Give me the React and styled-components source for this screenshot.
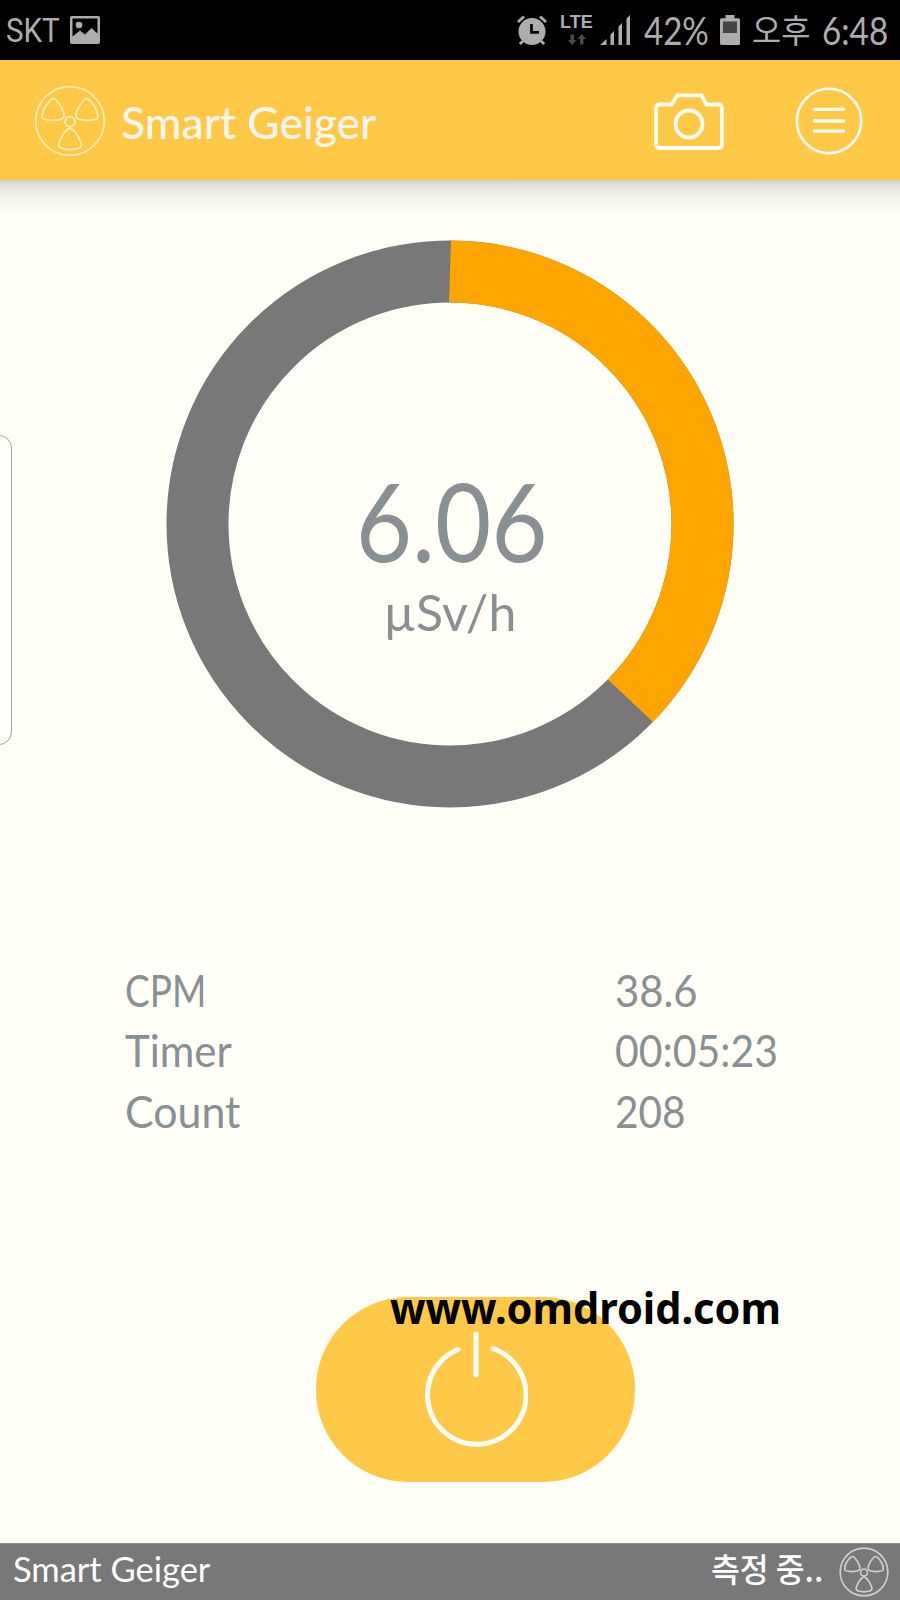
import React from 'react';
import styled, { createGlobalStyle } from 'styled-components';

const GlobalStyle = createGlobalStyle`
  * {
    box-sizing: border-box;
  }

  body {
    margin: 0;
    background: #fffff7;
    font-family: Lato, 'Noto Sans CJK KR', sans-serif;
  }

  svg {
    display: block;
    flex: none;
  }
`;

const Screen = styled.div`
  position: relative;
  width: 900px;
  height: 1600px;
  display: flex;
  flex-direction: column;
  overflow: hidden;
  background: #fffff7;
`;

const Text = styled.span`
  display: block;
  flex: none;
  width: ${({ $width }) => ($width ? `${$width}px` : 'auto')};
  font-size: ${({ $size }) => $size}px;
  white-space: nowrap;
  transform: scaleX(${({ $stretch }) => $stretch || 1});
  transform-origin: left center;
`;

const StatusBar = styled.header`
  height: 60px;
  padding: 0 13px 0 6px;
  display: flex;
  justify-content: space-between;
  background: #000;
  color: #adadad;
  line-height: 60px;
`;

const StatusGroup = styled.div`
  display: flex;
  align-items: center;
`;

const Carrier = styled(Text)`
  font-family: Roboto, sans-serif;
`;

const Battery = styled(Text)`
  margin-left: 13px;
`;

const Meridiem = styled(Text)`
  margin-left: 12px;
  line-height: 58px;
`;

const Network = styled.div`
  width: 40px;
  margin-left: 13px;
  display: flex;
  flex-direction: column;
  gap: 4px;
  font-family: 'Liberation Sans', sans-serif;
  font-weight: 700;
  line-height: 15px;

  svg {
    margin-left: 8px;
  }
`;

const Toolbar = styled.div`
  height: 120px;
  padding: 1px 37px 0 34px;
  display: flex;
  align-items: center;
  background: #ffc847;
  color: #f7f5ee;
  line-height: 60px;
`;

const Title = styled(Text)`
  margin-left: 15px;
  padding-top: 3px;
  font-weight: 500;
`;

const Actions = styled.div`
  margin-left: auto;
  display: flex;
  align-items: center;
  gap: 71px;
`;

const IconButton = styled.button`
  padding: 0;
  border: 0;
  background: none;
`;

const ToolbarShadow = styled.div`
  height: 36px;
  background: linear-gradient(#cfcfc9 0, #dcdcd5 3px, #e9e9e2 9px, #f6f6ee 21px, #fffff7 100%);
`;

const Gauge = styled.section`
  width: 568px;
  height: 568px;
  margin: 24px auto 0;
  display: grid;
  place-items: center;

  > * {
    grid-area: 1 / 1;
  }
`;

const Reading = styled.div`
  display: flex;
  flex-direction: column;
  align-items: center;
  padding-top: 66px;
  color: #899093;

  span {
    transform-origin: center;
  }
`;

const Dose = styled(Text)`
  margin-left: 4px;
  line-height: 110px;
`;

const Unit = styled(Text)`
  line-height: 74px;
`;

const Stats = styled.dl`
  margin: 151.5px 0 0;
  padding-left: 125px;
  color: #899093;
`;

const StatRow = styled.div`
  height: 60.7px;
  display: grid;
  grid-template-columns: 490px 1fr;
  line-height: 60.7px;

  dt,
  dd {
    margin: 0;
  }
`;

const PowerButton = styled.button`
  width: 319px;
  height: 185px;
  margin: 155.5px 0 0 316px;
  padding: 0 0 2px;
  flex: none;
  display: flex;
  align-items: center;
  justify-content: center;
  border: 0;
  border-radius: 92px;
  background: #ffc847;
`;

const Footer = styled.footer`
  height: 57px;
  margin-top: auto;
  padding: 0 11px 0 13px;
  display: flex;
  align-items: center;
  background: #787878;
  border-top: 1px solid #8b8b89;
  color: #fff;
`;

const FooterText = styled(Text)`
  line-height: 40px;
  margin-bottom: 8px;
`;

const Measuring = styled(FooterText)`
  margin-left: auto;
  font-family: 'Noto Sans CJK KR', sans-serif;
  font-weight: 500;
`;

const EdgePanel = styled.div`
  position: absolute;
  top: 435px;
  left: -20px;
  width: 32px;
  height: 310px;
  border: 1px solid #a3a39f;
  border-radius: 13px;
  background: #fffffb;
`;

const Watermark = styled(Text)`
  position: absolute;
  top: 1278px;
  left: 390px;
  font-family: 'Noto Sans', sans-serif;
  font-weight: 700;
  line-height: 60px;
  color: #000;
`;

const BLADE =
  'M-2.4 8.2Q0 6.6 2.4 8.2C5 10 9 16.5 11 22Q12.4 25.8 9 27Q0 30.2-9 27Q-12.4 25.8-11 22C-9 16.5-5 10-2.4 8.2Z';

const Radiation = ({ size, color, stroke }) => (
  <svg width={size} height={size} viewBox="-36 -36 72 72" fill="none" stroke={color} strokeWidth={stroke}>
    <circle r="34.3" />
    <circle r="5" cy="0.7" />
    {[0, 120, 240].map((angle) => (
      <path key={angle} d={BLADE} transform={`rotate(${angle})`} />
    ))}
  </svg>
);

const PictureIcon = () => (
  <svg width="30" height="28" viewBox="0 0 30 28" fill="#adadad">
    <path
      fillRule="evenodd"
      d="M2 0H28Q30 0 30 2V26Q30 28 28 28H2Q0 28 0 26V2Q0 0 2 0ZM2.5 2.5V20.5L10 14.5L15 18.5L21.5 12L27.5 17.5V2.5Z"
    />
    <circle cx="9" cy="9" r="3.3" />
  </svg>
);

const AlarmIcon = () => (
  <svg width="30" height="30" viewBox="0 0 30 30" fill="none" stroke="#adadad">
    <circle cx="15" cy="16.5" r="13.5" fill="#adadad" stroke="none" />
    <path d="M1 7L7 1.5M23 1.5L29 7M6 26L2.8 29M24 26L27.2 29" strokeWidth="2.8" />
    <path d="M14.5 9V17.3H22" stroke="#000" strokeWidth="2.7" />
  </svg>
);

const DataArrows = () => (
  <svg width="18" height="12" viewBox="0 0 18 12" fill="#4b4b4b">
    <path d="M2.5 0.5H6V6H8.5L4.2 11L0 6H2.5ZM12 10.5H15.5V5H18L13.7 0L9.5 5H12Z" />
  </svg>
);

const SignalIcon = () => (
  <svg width="31" height="30" viewBox="0 0 31 30" fill="#adadad">
    <path d="M0 30L6.5 24V30ZM10.5 19.5L14 16V30H10.5ZM18.5 11.5L22 8V30H18.5ZM26.5 3.5L30 0V30H26.5Z" />
  </svg>
);

const BatteryIcon = () => (
  <svg width="20" height="30" viewBox="0 0 20 30">
    <path d="M5.5 0H14.5V3.3H18.5Q20 3.3 20 5V28.3Q20 30 18.5 30H1.5Q0 30 0 28.3V5Q0 3.3 1.5 3.3H5.5Z" fill="#adadad" />
    <path d="M3 6.5H17V18H3Z" fill="#454545" />
  </svg>
);

const CameraIcon = () => (
  <svg width="70" height="58" viewBox="0 0 70 58" fill="none" stroke="#fffdf5" strokeWidth="3.8">
    <path
      d="M6 12.5H17.5L23.5 3.3H47.5L52.5 12.5H64Q68 12.5 68 16.5V52Q68 56 64 56H6Q2 56 2 52V16.5Q2 12.5 6 12.5Z"
      strokeLinejoin="round"
    />
    <circle cx="35" cy="32" r="13.5" />
  </svg>
);

const MenuIcon = () => (
  <svg width="68" height="68" viewBox="0 0 68 68" fill="none" stroke="#fffdf5">
    <circle cx="34" cy="34" r="32.2" strokeWidth="2.6" />
    <path d="M19.3 22.3H48.7M19.3 34H48.7M19.3 44.2H48.7" strokeWidth="3.3" strokeLinecap="round" />
  </svg>
);

const PowerIcon = () => (
  <svg width="104" height="116" viewBox="0 0 104 116" fill="none" stroke="#fffff9" strokeWidth="5" strokeLinecap="round">
    <path d="M34 18.5A49.3 49.3 0 1 0 69 17.5" />
    <path d="M52 3V44" />
  </svg>
);

// The gauge runs clockwise from twelve o'clock
const Ring = () => (
  <svg width="568" height="568" viewBox="-284 -284 568 568">
    <circle r="252.5" fill="none" stroke="#787878" strokeWidth="62" />
    <path d="M1-283.5A283.5 283.5 0 0 1 203 198L157.8 155.5A221.5 221.5 0 0 0-1-221.5Z" fill="#ffa500" />
  </svg>
);

const stats = [
  { label: 'CPM', value: '38.6', labelStretch: 0.84, valueStretch: 0.95 },
  { label: 'Timer', value: '00:05:23', labelStretch: 0.955, valueStretch: 0.93 },
  { label: 'Count', value: '208', labelStretch: 0.975, valueStretch: 0.92 },
];

const App = () => {
  return (
    <Screen>
      <GlobalStyle />
      <StatusBar>
        <StatusGroup>
          <Carrier $size={34} $width={64} $stretch={0.87}>SKT</Carrier>
          <PictureIcon />
        </StatusGroup>
        <StatusGroup>
          <AlarmIcon />
          <Network>
            <Text $size={18}>LTE</Text>
            <DataArrows />
          </Network>
          <SignalIcon />
          <Battery $size={38} $width={76} $stretch={0.87}>42%</Battery>
          <BatteryIcon />
          <Meridiem $size={33} $width={70} $stretch={0.96}>오후</Meridiem>
          <Text $size={38} $width={65} $stretch={0.875}>6:48</Text>
        </StatusGroup>
      </StatusBar>
      <Toolbar>
        <Radiation size={72} color="#fff0ba" stroke={1.7} />
        <Title $size={44} $stretch={1.01}>Smart Geiger</Title>
        <Actions>
          <IconButton aria-label="Camera">
            <CameraIcon />
          </IconButton>
          <IconButton aria-label="Menu">
            <MenuIcon />
          </IconButton>
        </Actions>
      </Toolbar>
      <ToolbarShadow />
      <Gauge>
        <Ring />
        <Reading>
          <Dose $size={108} $stretch={0.9}>6.06</Dose>
          <Unit $size={50}>µSv/h</Unit>
        </Reading>
      </Gauge>
      <Stats>
        {stats.map(({ label, value, labelStretch, valueStretch }) => (
          <StatRow key={label}>
            <Text as="dt" $size={44} $stretch={labelStretch}>{label}</Text>
            <Text as="dd" $size={44} $stretch={valueStretch}>{value}</Text>
          </StatRow>
        ))}
      </Stats>
      <PowerButton aria-label="Power">
        <PowerIcon />
      </PowerButton>
      <Footer>
        <FooterText $size={35} $stretch={0.985}>Smart Geiger</FooterText>
        <Measuring $size={33} $width={128} $stretch={0.95}>측정 중..</Measuring>
        <Radiation size={50} color="#cfcfcf" stroke={2.4} />
      </Footer>
      <EdgePanel />
      <Watermark $size={43} $stretch={0.965}>www.omdroid.com</Watermark>
    </Screen>
  );
};

export default App;
